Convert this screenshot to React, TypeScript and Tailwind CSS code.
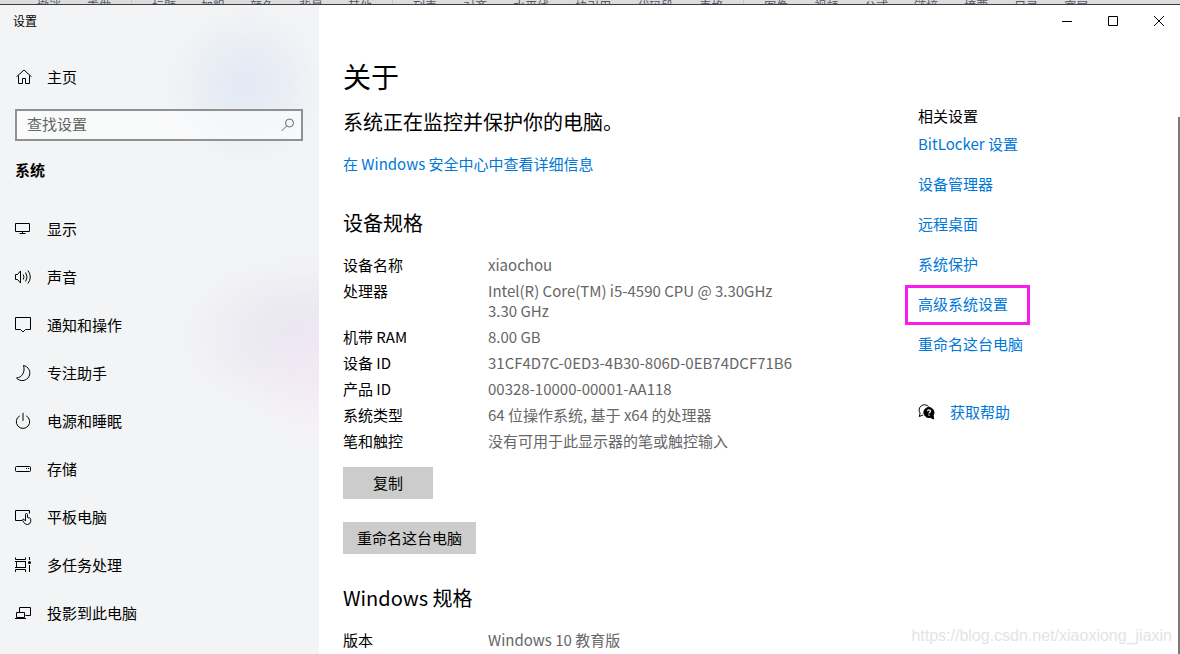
import type { ReactNode } from 'react';

const toolbarGroups = [
  ['撤消', '重做'],
  ['标题', '加粗', '颜色', '背景', '其他'],
  ['列表', '对齐', '水平线', '块引用', '代码段', '表格'],
  ['图像', '视频', '公式', '链接', '摘要', '目录', '宽屏'],
];

function Icon({ children }: { children: ReactNode }) {
  return (
    <svg width="18" height="18" viewBox="0 0 18 18" fill="none" stroke="#000" strokeWidth="1" className="shrink-0" aria-hidden="true">
      {children}
    </svg>
  );
}

const navItems: { label: string; icon: ReactNode }[] = [
  {
    label: '显示',
    icon: <path d="M.5 3.5h14v8H.5zM7.5 11.5v2M4.5 13.5h6" />,
  },
  {
    label: '声音',
    icon: (
      <>
        <path d="M.5 6.5h2l3-3.5v12l-3-3.5h-2z" />
        <path d="M8.2 6.5q1.6 2.5 0 5M10.6 4.5q3 4.5 0 9M13 2.5q4.6 6.5 0 13" />
      </>
    ),
  },
  {
    label: '通知和操作',
    icon: <path d="M.5 1.5h15v12h-5L8 16l-2.500-2.500h-5z" />,
  },
  {
    label: '专注助手',
    icon: <path d="M8.500 1.500a7.600 7.600 0 1 1-7 12.500C7 13.500 10.500 8 8.500 1.500z" />,
  },
  {
    label: '电源和睡眠',
    icon: <path d="M4.800 3.800a6.700 6.700 0 1 0 6.400 0M8 .8v8" />,
  },
  {
    label: '存储',
    icon: (
      <>
        <rect x=".5" y="6.500" width="15" height="5" rx="1" />
        <path d="M11 8.500h1M13 8.500h1" />
      </>
    ),
  },
  {
    label: '平板电脑',
    icon: (
      <>
        <path d="M7 12.500H.5v-10h14v3" />
        <path d="M10.500 12V6.500q0-1 1-1t1 1v3l2.200.5q1 .3 1 1.500v2q-.3 2.800-3.200 3-2.500.2-3.500-2L7.500 12.200q0-1.300 1.300-1l1.700 1.800z" />
      </>
    ),
  },
  {
    label: '多任务处理',
    icon: (
      <>
        <path d="M.5 1.500v2h10v-2M0 5.500h11M1.500 5.500v6M10.500 5.500v6M0 11.500h11M.5 16v-2.500h10V16M14.500 1v3M14.500 9v7" />
        <circle cx="14.500" cy="6.500" r="1.500" fill="#000" stroke="none" />
      </>
    ),
  },
  {
    label: '投影到此电脑',
    icon: <path d="M4.500 8V3.500h11v8h-5M1.500 8.500h8v5h-8zM0 14.500h11" />,
  },
];

const deviceSpecs: [string, string][] = [
  ['设备名称', 'xiaochou'],
  ['处理器', 'Intel(R) Core(TM) i5-4590 CPU @ 3.30GHz\n3.30 GHz'],
  ['机带 RAM', '8.00 GB'],
  ['设备 ID', '31CF4D7C-0ED3-4B30-806D-0EB74DCF71B6'],
  ['产品 ID', '00328-10000-00001-AA118'],
  ['系统类型', '64 位操作系统, 基于 x64 的处理器'],
  ['笔和触控', '没有可用于此显示器的笔或触控输入'],
];

const windowsSpecs: [string, string][] = [['版本', 'Windows 10 教育版']];

const relatedLinks = ['BitLocker 设置', '设备管理器', '远程桌面', '系统保护', '高级系统设置', '重命名这台电脑'];

function SpecTable({ rows, label }: { rows: [string, string][]; label: string }) {
  return (
    <table aria-label={label} className="text-[15px] leading-5">
      <tbody>
        {rows.map(([name, value]) => (
          <tr key={name} className="align-top">
            <th scope="row" className="w-[145px] py-[3px] text-left font-normal">{name}</th>
            <td className="whitespace-pre-line py-[3px] text-[#666]">{value}</td>
          </tr>
        ))}
      </tbody>
    </table>
  );
}

function EditorToolbar() {
  return (
    <div className="flex h-[5px] shrink-0 overflow-hidden border-b border-[#3c3c3c] bg-[#dcdcdc] pl-[37px] text-xs leading-3 text-[#555566]">
      {toolbarGroups.map((group, i) => (
        <div key={group[0]} className="flex shrink-0">
          {i > 0 && <span className="mx-5 w-px bg-[#c4c4c4]" />}
          <div className={i === 1 ? 'flex gap-[25px]' : 'flex gap-[26px]'}>
            {group.map((item) => (
              <span key={item} className="h-3 whitespace-nowrap">{item}</span>
            ))}
          </div>
        </div>
      ))}
    </div>
  );
}

function Sidebar() {
  return (
    <aside className="w-[319px] shrink-0 bg-[#f3f4f5] bg-[radial-gradient(ellipse_90px_90px_at_245px_80px,#e2e9f4_0%,#e2e9f480_50%,#e2e9f420_80%,#e2e9f400_100%),radial-gradient(ellipse_70px_70px_at_319px_370px,#f6e8f7c0_0%,#f6e8f760_50%,#f6e8f700_100%),radial-gradient(ellipse_130px_85px_at_300px_330px,#e8e6f0_0%,#e8e6f0a0_45%,#e8e6f030_75%,#e8e6f000_100%)]">
      <div className="flex h-8 items-center pl-[13px] text-xs">设置</div>
      <a href="#home" className="mt-5 flex h-10 items-center gap-[14px] pl-[15px] text-[15px]">
        <Icon>
          <path d="M1.500 8.800 9 2l7.500 6.800M3.500 7.500v8h4v-5h3v5h4v-8" />
        </Icon>
        主页
      </a>
      <label className="mx-4 ml-[15px] mt-3 flex h-8 items-center border-2 border-[#8f9193] bg-white/50 pl-[10px]">
        <input aria-label="查找设置" placeholder="查找设置" className="min-w-0 flex-1 bg-transparent pb-0.5 text-[15px] outline-none placeholder:text-[#666]" />
        <svg width="14" height="14" viewBox="0 0 14 14" fill="none" stroke="#666" className="mr-1.5" aria-hidden="true">
          <circle cx="8.500" cy="5" r="4" />
          <path d="M5.700 7.900.7 12.900" />
        </svg>
      </label>
      <h2 className="mb-[25px] mt-[19px] pl-[15px] text-[15px] font-bold leading-5">系统</h2>
      <nav>
        {navItems.map((item) => (
          <a key={item.label} href={`#${item.label}`} className="flex h-12 items-center gap-[14px] pl-[15px] text-[15px]">
            <Icon>{item.icon}</Icon>
            {item.label}
          </a>
        ))}
      </nav>
    </aside>
  );
}

function WindowControls() {
  return (
    <div className="flex h-8 shrink-0 justify-end gap-0.5">
      <button aria-label="最小化" className="flex w-11 items-center justify-center pl-0.5">
        <svg width="10" height="10" viewBox="0 0 10 10" stroke="#000"><path d="M0 5.500h10" /></svg>
      </button>
      <button aria-label="最大化" className="flex w-11 items-center justify-center pl-0.5">
        <svg width="10" height="10" viewBox="0 0 10 10" fill="none" stroke="#000"><path d="M.5.5h9v9h-9z" /></svg>
      </button>
      <button aria-label="关闭" className="flex w-11 items-center justify-center pl-0.5">
        <svg width="10" height="10" viewBox="0 0 10 10" stroke="#000"><path d="m0 0 10 10M10 0 0 10" /></svg>
      </button>
    </div>
  );
}

function About() {
  return (
    <section className="min-w-0 flex-1 pl-6 pt-[21px]">
      <h1 className="text-[28px] leading-9">关于</h1>
      <p className="mt-[14px] text-xl leading-7">系统正在监控并保护你的电脑。</p>
      <a href="#security" className="mt-[18px] block text-[15px] leading-5 text-[#0078d7]">在 Windows 安全中心中查看详细信息</a>
      <h2 className="mt-[35px] text-xl leading-7">设备规格</h2>
      <div className="mt-[15px]"><SpecTable rows={deviceSpecs} label="设备规格" /></div>
      <button className="mt-[13px] block h-8 w-[90px] bg-[#ccc] text-[15px]">复制</button>
      <button className="mt-[23px] block h-8 bg-[#ccc] px-[14px] text-[15px]">重命名这台电脑</button>
      <h2 className="mt-[30px] text-xl leading-7">Windows 规格</h2>
      <div className="mt-[15px]"><SpecTable rows={windowsSpecs} label="Windows 规格" /></div>
    </section>
  );
}

function Related() {
  return (
    <aside className="w-[260px] shrink-0 pt-[70px] text-[15px]">
      <h2 className="leading-[18px]">相关设置</h2>
      <ul className="text-[#0078d7]">
        {relatedLinks.map((label) => (
          <li key={label} className="flex h-10">
            <a
              href={`#${label}`}
              className={
                label === '高级系统设置'
                  ? '-ml-[13px] flex w-[125px] items-center border-[3px] border-[#f81cf0] pb-0.5 pl-[10px]'
                  : 'flex items-center pb-0.5'
              }
            >
              {label}
            </a>
          </li>
        ))}
      </ul>
      <a href="#help" className="mt-[27px] flex h-10 items-center gap-[14px] text-[#0078d7]">
        <Icon>
          <path d="M1.200 13.500l.9-3.300A5 5 0 1 1 10.800 4M1.200 13.500l3.800-1.500" />
          <path d="M11 4.500a5 5 0 0 1 4.200 7.700l.3 3.800-3.300-1.700A5 5 0 1 1 11 4.500z" fill="#000" />
          <path d="M9.500 8.200q.1-1.400 1.500-1.400t1.500 1.300q0 .8-.8 1.300t-.7 1.200M11 11.500v1.200" stroke="#fff" strokeWidth="1.200" />
        </Icon>
        获取帮助
      </a>
    </aside>
  );
}

export default function App() {
  return (
    <div className="relative flex h-screen flex-col overflow-hidden bg-white font-['Noto_Sans_CJK_SC',sans-serif] text-black">
      <EditorToolbar />
      <div className="flex min-h-0 flex-1">
        <Sidebar />
        <main className="flex min-w-0 flex-1 flex-col">
          <WindowControls />
          <div className="flex min-h-0 flex-1">
            <About />
            <Related />
            <div className="mt-20 w-0.5 shrink-0 bg-[#7a7a7a]" />
          </div>
        </main>
      </div>
      <div className="absolute bottom-2 right-2 font-['Liberation_Sans',sans-serif] text-base leading-5 text-[#e4e4e4]">
        https://blog.csdn.net/xiaoxiong_jiaxin
      </div>
    </div>
  );
}
